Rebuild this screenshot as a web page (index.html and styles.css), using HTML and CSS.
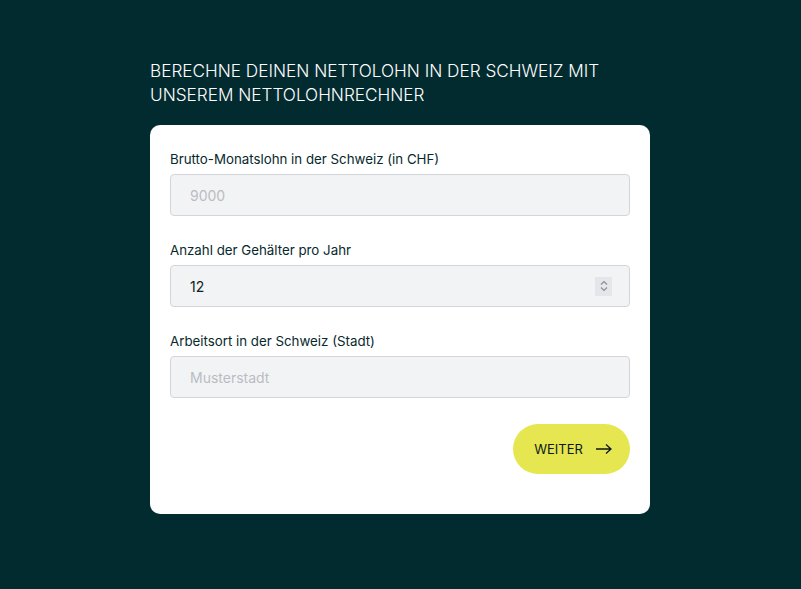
FILE: index.html
```html
<!DOCTYPE html>
<html lang="de">
<head>
<meta charset="utf-8">
<title>Nettolohnrechner</title>
<link rel="stylesheet" href="styles.css">
</head>
<body>
<main class="wrap">
  <h1 class="title">BERECHNE DEINEN NETTOLOHN IN DER SCHWEIZ MIT UNSEREM NETTOLOHNRECHNER</h1>
  <form class="card">
    <div class="group">
      <label class="label">Brutto-Monatslohn in der Schweiz (in CHF)</label>
      <div class="field"><input class="input" type="text" placeholder="9000"></div>
    </div>
    <div class="group">
      <label class="label">Anzahl der Gehälter pro Jahr</label>
      <div class="field">
        <input class="input" type="text" value="12">
        <span class="spin">
          <svg width="10" height="16" viewBox="0 0 10 16"><path d="M2 6.5 L5 3.5 L8 6.5" fill="none" stroke="#8a8f98" stroke-width="1.2"/><path d="M2 9.5 L5 12.5 L8 9.5" fill="none" stroke="#8a8f98" stroke-width="1.2"/></svg>
        </span>
      </div>
    </div>
    <div class="group">
      <label class="label">Arbeitsort in der Schweiz (Stadt)</label>
      <div class="field"><input class="input" type="text" placeholder="Musterstadt"></div>
    </div>
    <div class="actions">
      <button class="btn" type="button">WEITER
        <svg width="18" height="12" viewBox="0 0 18 12"><path d="M1 6 H16 M11 1.5 L16 6 L11 10.5" fill="none" stroke="#0b1a1a" stroke-width="1.3"/></svg>
      </button>
    </div>
  </form>
</main>
</body>
</html>
```
FILE: styles.css
```css
* { box-sizing: border-box; }
html, body { margin: 0; height: 100%; }
body {
  background: #022b2f;
  font-family: "Inter", "Lato", sans-serif;
}
.wrap {
  width: 500px;
  margin-left: 150px;
  padding-top: 59px;
}
.title {
  margin: 0 0 18px;
  color: #ffffff;
  font-weight: 300;
  font-size: 17.2px;
  line-height: 24px;
  letter-spacing: 0;
}
.card {
  background: #ffffff;
  border-radius: 10px;
  padding: 24px 20px 40px;
  display: flex;
  flex-direction: column;
  gap: 24px;
}
.group {
  display: flex;
  flex-direction: column;
  gap: 5px;
}
.label {
  color: #07292c;
  font-size: 13.3px;
  line-height: 20px;
  font-weight: 400;
}
.field {
  display: flex;
  align-items: center;
  height: 42px;
  background: #f2f3f5;
  border: 1px solid #d3d5d9;
  border-radius: 4px;
  padding: 0 19px;
}
.input {
  flex: 1;
  border: 0;
  background: transparent;
  outline: none;
  font-family: inherit;
  font-size: 14px;
  color: #0d1f21;
  padding: 0;
}
.input::placeholder { color: #b9bdc3; }
.spin {
  width: 17px;
  height: 19px;
  background: #e4e6ea;
  display: flex;
  align-items: center;
  justify-content: center;
  margin-right: -2px;
}
.actions {
  display: flex;
  justify-content: flex-end;
  margin-top: 2px;
}
.btn {
  width: 117px;
  height: 50px;
  border: 0;
  border-radius: 25px;
  background: #e6e650;
  color: #0b1a1a;
  font-family: inherit;
  font-size: 13px;
  font-weight: 400;
  display: flex;
  align-items: center;
  justify-content: center;
  gap: 12px;
  padding: 0 0 0 4px;
}
```
